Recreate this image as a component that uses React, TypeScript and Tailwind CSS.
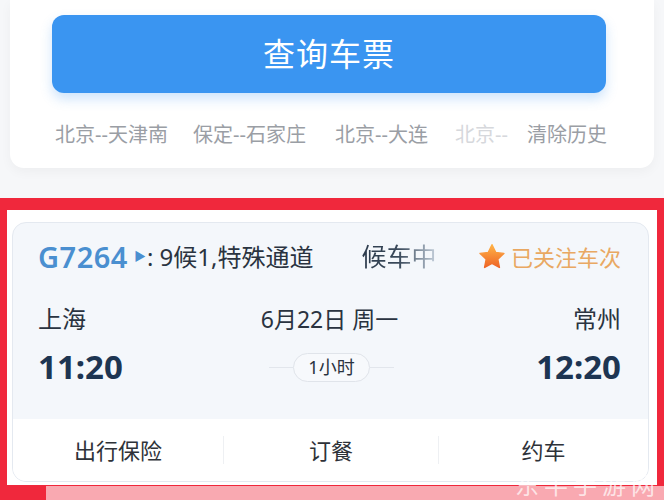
import React from "react";

const history = [
  { t: "北京--天津南", w: "w-[138px]" },
  { t: "保定--石家庄", w: "w-[142px]" },
  { t: "北京--大连", w: "w-[120px]" },
];

function Star() {
  return (
    <svg viewBox="0 0 24 24" className="w-[30px] h-[30px]">
      <defs>
        <linearGradient id="st" x1="0" y1="0" x2="0" y2="1">
          <stop offset="0" stopColor="#ffb347" />
          <stop offset="1" stopColor="#ee6526" />
        </linearGradient>
      </defs>
      <path
        d="M12 2.2l2.9 6.1 6.6.8-4.9 4.6 1.3 6.6L12 17l-5.9 3.3 1.3-6.6-4.9-4.6 6.6-.8z"
        fill="url(#st)"
        stroke="url(#st)"
        strokeWidth="1.2"
        strokeLinejoin="round"
      />
    </svg>
  );
}

export default function App() {
  return (
    <div
      className="relative w-[664px] h-[500px] overflow-hidden bg-[#f6f7f9] text-[#2a3340]"
      style={{ fontFamily: '"Noto Sans", "Noto Sans CJK SC", sans-serif' }}
    >
      {/* Search card */}
      <div className="mx-[10px] h-[168px] bg-white rounded-b-[14px] shadow-[0_4px_12px_rgba(0,0,0,0.04)] pt-[15px]">
        <button className="ml-[42px] w-[554px] h-[78px] rounded-[12px] bg-[#3a95f1] text-white text-[32px] tracking-[1px] shadow-[0_6px_12px_rgba(58,149,241,0.25)] flex items-center justify-center">
          查询车票
        </button>
        <div className="mt-[29px] ml-[45px] flex items-center text-[20px] leading-[26px] text-[#9a9ea5] whitespace-nowrap">
          {history.map((h) => (
            <span key={h.t} className={h.w}>{h.t}</span>
          ))}
          <span className="text-[#d6d8dc] w-[72px] overflow-hidden">北京--</span>
          <span>清除历史</span>
        </div>
      </div>

      {/* Highlighted train card */}
      <div className="mt-[30px] border-x-[7px] border-t-[12px] border-b-[30px] border-[#f0283c] bg-white pt-[12px] pl-[5px] pr-[8px] pb-[3px]">
        <div className="h-[260px] rounded-[14px] border border-[#e4e9f0] bg-[#f4f7fb] overflow-hidden flex flex-col">
          <div className="flex-1 pt-[19px] pl-[25px] pr-[27px]">
            <div className="h-[30px] flex items-center whitespace-nowrap">
              <span className="text-[29px] font-semibold text-[#4a8fd0] tracking-[0.5px]">G7264</span>
              <span className="ml-[6px] text-[#4a8fd0] text-[12px]">▶</span>
              <span className="ml-[1px] text-[24px]">: 9候1,特殊通道</span>
              <span className="ml-[48px] text-[25px] bg-gradient-to-r from-[#2b3a4b] via-[#3b4a5b] to-[#c7d2de] bg-clip-text text-transparent">
                候车中
              </span>
              <span className="ml-auto flex items-center text-[22px] text-[#e9a862]">
                <Star />
                <span className="ml-[4px]">已关注车次</span>
              </span>
            </div>
            <div className="mt-[32px] h-[30px] flex items-center justify-between text-[24px]">
              <span>上海</span>
              <span className="text-[23px]">6月22日 周一</span>
              <span>常州</span>
            </div>
            <div className="mt-[13px] h-[40px] flex items-center justify-between">
              <span className="text-[33px] font-bold text-[#1d3552]">11:20</span>
              <div className="ml-[4px] flex items-center">
                <span className="w-[24px] h-px bg-[#e2e6ec]" />
                <span className="h-[29px] px-[14px] rounded-full border border-[#e0e4ea] bg-[#f7f9fc] text-[18px] flex items-center">
                  1小时
                </span>
                <span className="w-[24px] h-px bg-[#e2e6ec]" />
              </div>
              <span className="text-[33px] font-bold text-[#1d3552]">12:20</span>
            </div>
          </div>
          <div className="h-[62px] bg-white flex items-center text-[22px] text-[#2e3238]">
            <div className="w-[210px] text-center">出行保险</div>
            <div className="w-px h-[28px] bg-[#eef0f3]" />
            <div className="w-[214px] text-center">订餐</div>
            <div className="w-px h-[28px] bg-[#eef0f3]" />
            <div className="flex-1 text-center">约车</div>
          </div>
        </div>
      </div>

      {/* Watermark overlay */}
      <div className="absolute left-[46px] right-0 bottom-0 h-[14px] bg-white/60" />
      <div className="absolute right-[4px] bottom-[1px] text-[24px] leading-[28px] text-white/70 tracking-[5px]">东半手游网</div>
    </div>
  );
}
